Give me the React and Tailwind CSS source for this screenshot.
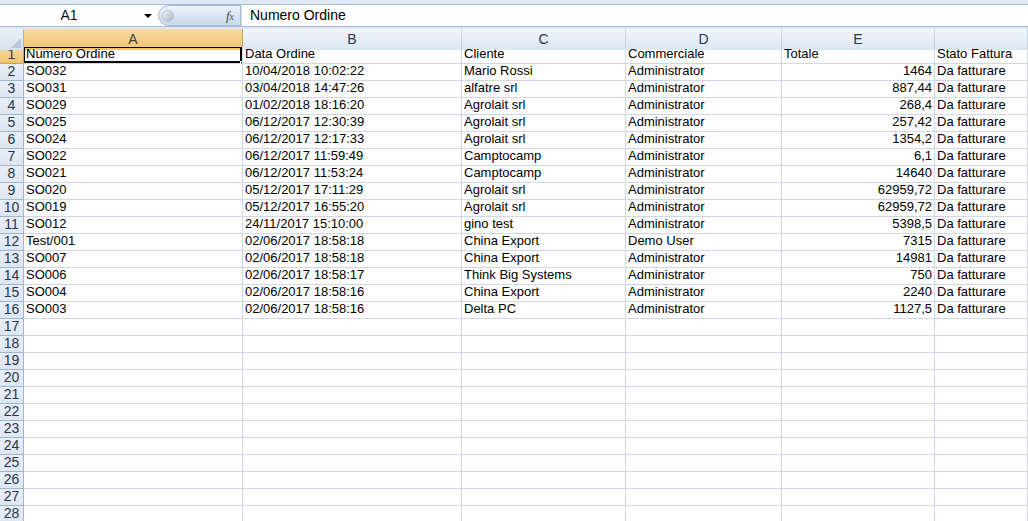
import React from "react";

const cols = ["A", "B", "C", "D", "E", ""];

const rows = [
  ["Numero Ordine", "Data Ordine", "Cliente", "Commerciale", "Totale", "Stato Fattura"],
  ["SO032", "10/04/2018 10:02:22", "Mario Rossi", "Administrator", "1464", "Da fatturare"],
  ["SO031", "03/04/2018 14:47:26", "alfatre srl", "Administrator", "887,44", "Da fatturare"],
  ["SO029", "01/02/2018 18:16:20", "Agrolait srl", "Administrator", "268,4", "Da fatturare"],
  ["SO025", "06/12/2017 12:30:39", "Agrolait srl", "Administrator", "257,42", "Da fatturare"],
  ["SO024", "06/12/2017 12:17:33", "Agrolait srl", "Administrator", "1354,2", "Da fatturare"],
  ["SO022", "06/12/2017 11:59:49", "Camptocamp", "Administrator", "6,1", "Da fatturare"],
  ["SO021", "06/12/2017 11:53:24", "Camptocamp", "Administrator", "14640", "Da fatturare"],
  ["SO020", "05/12/2017 17:11:29", "Agrolait srl", "Administrator", "62959,72", "Da fatturare"],
  ["SO019", "05/12/2017 16:55:20", "Agrolait srl", "Administrator", "62959,72", "Da fatturare"],
  ["SO012", "24/11/2017 15:10:00", "gino test", "Administrator", "5398,5", "Da fatturare"],
  ["Test/001", "02/06/2017 18:58:18", "China Export", "Demo User", "7315", "Da fatturare"],
  ["SO007", "02/06/2017 18:58:18", "China Export", "Administrator", "14981", "Da fatturare"],
  ["SO006", "02/06/2017 18:58:17", "Think Big Systems", "Administrator", "750", "Da fatturare"],
  ["SO004", "02/06/2017 18:58:16", "China Export", "Administrator", "2240", "Da fatturare"],
  ["SO003", "02/06/2017 18:58:16", "Delta PC", "Administrator", "1127,5", "Da fatturare"],
];

const gridCols = "grid-cols-[24px_219px_219px_164px_156px_153px_1fr]";

export default function App() {
  const allRows = [];
  for (let i = 0; i < 28; i++) allRows.push(rows[i] || ["", "", "", "", "", ""]);

  return (
    <div className="w-[1028px] h-[521px] overflow-hidden bg-white text-[13px] text-black" style={{ fontFamily: '"Liberation Sans", Arial, sans-serif' }}>
      {/* formula bar */}
      <div className="h-[29px] bg-[#dfe8f4] pt-[4px] pb-[2px]">
        <div className="h-[23px] flex bg-white border-y border-[#a5b9d3]">
          <div className="w-[158px] flex items-center relative">
            <span className="w-[138px] text-center text-[14px] text-[#111]">A1</span>
            <span className="absolute left-[144px] top-[9px] w-0 h-0 border-l-[4px] border-r-[4px] border-t-[4px] border-l-transparent border-r-transparent border-t-black" />
          </div>
          <div className="w-[83px] h-[21px] rounded-l-full bg-gradient-to-b from-[#eef3fa] to-[#c9d8ec] border border-[#a8bbd6] flex items-center justify-between pl-[3px] pr-[6px]">
            <span className="w-[12px] h-[12px] rounded-full bg-gradient-to-br from-[#f4f6f9] to-[#a7b3c2] border border-[#b9c5d4]" />
            <span className="italic text-[13px] text-[#4a4a4a]" style={{ fontFamily: '"Liberation Serif", serif' }}>f<span className="text-[10px]">x</span></span>
          </div>
          <div className="flex-1 flex items-center pl-[8px] text-[14px] border-l border-[#d5dde8]">Numero Ordine</div>
        </div>
      </div>

      {/* column headers */}
      <div className={`grid ${gridCols} h-[18px] border-b border-[#9eb6ce]`}>
        <div className="bg-gradient-to-b from-[#e9eff7] to-[#d8e2ee] border-r border-[#9eb6ce] relative">
          <span className="absolute right-[2px] bottom-[2px] w-0 h-0 border-b-[10px] border-l-[10px] border-b-[#b7c8dd] border-l-transparent" />
        </div>
        {cols.map((c, i) => (
          <div
            key={i}
            className={
              "flex items-center justify-center text-[14px] border-r " +
              (i === 0
                ? "bg-gradient-to-b from-[#f9dba3] to-[#f1c36b] border-[#c2a26a] text-[#3c3c3c]"
                : "bg-gradient-to-b from-[#f1f5fb] to-[#dce6f2] border-[#c5d3e3] text-[#27364d]")
            }
          >
            {c}
          </div>
        ))}
      </div>

      {/* rows */}
      {allRows.map((r, ri) => (
        <div key={ri} className={`grid ${gridCols} h-[17px]`}>
          <div
            className={
              "flex items-center justify-center text-[14px] leading-none border-r border-b pb-[2px] " +
              (ri === 0
                ? "bg-gradient-to-b from-[#f9dba3] to-[#f1c36b] border-[#c2a26a] text-[#3c3c3c]"
                : "bg-gradient-to-b from-[#e9eff8] to-[#dde6f2] border-[#9eb6ce] text-[#27364d]")
            }
          >
            {ri + 1}
          </div>
          {r.map((v, ci) => (
            <div
              key={ci}
              className={
                "relative flex items-center px-[2px] pb-[3px] whitespace-nowrap overflow-hidden border-r border-b border-[#d0d7e5] leading-none " +
                (ci === 4 && ri > 0 ? "justify-end" : "")
              }
            >
              {v}
              {ri === 0 && ci === 0 && (
                <>
                  <span className="absolute inset-0 -top-px -left-px border-2 border-black pointer-events-none" />
                  <span className="absolute right-[-3px] bottom-[-3px] w-[5px] h-[5px] bg-black border border-white" />
                </>
              )}
            </div>
          ))}
          <div className="border-b border-[#d0d7e5]" />
        </div>
      ))}
    </div>
  );
}
